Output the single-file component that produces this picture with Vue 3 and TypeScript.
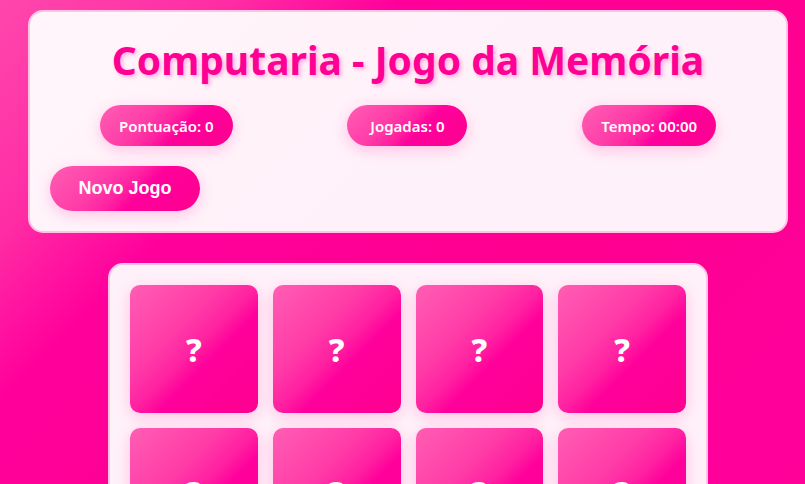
<script setup lang="ts">
import { computed, onUnmounted, ref } from 'vue'

interface Card {
  id: number
  symbol: string
  open: boolean
  matched: boolean
}

const symbols: string[] = ['A', 'B', 'C', 'D', 'E', 'F', 'G', 'H']

function deal(): Card[] {
  return [...symbols, ...symbols]
    .map((symbol) => ({ symbol, order: Math.random() }))
    .sort((a, b) => a.order - b.order)
    .map(({ symbol }, id) => ({ id, symbol, open: false, matched: false }))
}

const cards = ref<Card[]>(deal())
const score = ref(0)
const moves = ref(0)
const seconds = ref(0)
let timer: number | undefined
let hideTimer: number | undefined

const clock = computed(() => {
  const pad = (n: number) => String(n).padStart(2, '0')
  return `${pad(Math.floor(seconds.value / 60))}:${pad(seconds.value % 60)}`
})

function stop(): void {
  window.clearInterval(timer)
  timer = undefined
}

function newGame(): void {
  stop()
  window.clearTimeout(hideTimer)
  cards.value = deal()
  score.value = 0
  moves.value = 0
  seconds.value = 0
}

function flip(card: Card): void {
  const open = cards.value.filter((c) => c.open && !c.matched)
  if (card.open || card.matched || open.length > 1) return
  if (timer === undefined) timer = window.setInterval(() => seconds.value++, 1000)
  card.open = true
  const first = open[0]
  if (!first) return
  moves.value++
  if (first.symbol === card.symbol) {
    first.matched = card.matched = true
    score.value += 10
    if (cards.value.every((c) => c.matched)) stop()
  } else {
    hideTimer = window.setTimeout(() => {
      first.open = card.open = false
    }, 900)
  }
}

onUnmounted(() => {
  stop()
  window.clearTimeout(hideTimer)
})
</script>

<template>
  <div class="page">
    <header class="panel header">
      <h1>Computaria - Jogo da Memória</h1>
      <div class="stats">
        <div class="stat">Pontuação: {{ score }}</div>
        <div class="stat">Jogadas: {{ moves }}</div>
        <div class="stat">Tempo: {{ clock }}</div>
      </div>
      <button class="new-game" type="button" @click="newGame">Novo Jogo</button>
    </header>
    <main class="panel board">
      <button v-for="card in cards" :key="card.id" class="card" type="button" @click="flip(card)">
        {{ card.open ? card.symbol : '?' }}
      </button>
    </main>
  </div>
</template>

<style>
body {
  margin: 0;
}
</style>

<style scoped>
.page {
  box-sizing: border-box;
  min-height: 100vh;
  padding: 10px 17px 10px 28px;
  background: linear-gradient(135deg, #ff47ad 0%, #ff2ca4 14%, #ff009c 24%, #ff0090 48%, #ff009c 70%, #ff0090 100%);
  font-family: 'Segoe UI', 'Noto Sans', 'Open Sans', sans-serif;
}

.panel {
  box-sizing: border-box;
  padding: 20px;
  border: 2px solid #ffc4e4;
  border-radius: 15px;
  background: linear-gradient(135deg, #fff6fb 0%, #fff1f9 50%, #fff1f9 100%);
}

.header {
  max-width: 800px;
  margin: 0 auto 30px;
}

h1 {
  margin: 0 0 18px;
  color: #ff0095;
  font-size: 39px;
  font-weight: 700;
  line-height: 55px;
  text-align: center;
  text-shadow: 2px 2px 4px rgba(255, 0, 149, 0.3);
}

.stats {
  display: flex;
  flex-wrap: wrap;
  justify-content: space-around;
  gap: 15px;
  margin-bottom: 20px;
}

.stat,
.new-game,
.card {
  border: 0;
  background: linear-gradient(135deg, #ff5eb3 0%, #ff3ca8 35%, #ff22a1 50%, #ff009c 61%, #ff0090 100%);
  box-shadow: 0 4px 15px rgba(255, 0, 149, 0.2);
  color: #fff;
}

.stat {
  box-sizing: border-box;
  min-width: 120px;
  padding: 11px 19px 9px;
  border-radius: 25px;
  font-size: 15px;
  font-weight: 600;
  line-height: 21px;
  text-align: center;
}

.new-game {
  display: block;
  min-width: 150px;
  padding: 12px 28px;
  border-radius: 25px;
  font-family: 'Liberation Sans', Arial, sans-serif;
  font-size: 18px;
  font-weight: 700;
  line-height: 21px;
  cursor: pointer;
}

.board {
  display: grid;
  grid-template-columns: repeat(4, 1fr);
  gap: 15px;
  max-width: 600px;
  margin: 0 auto;
  background: #fff1f9;
}

.card {
  aspect-ratio: 1;
  padding: 2px 0 0;
  border-radius: 10px;
  font-family: inherit;
  font-size: 32px;
  font-weight: 800;
  cursor: pointer;
}
</style>
